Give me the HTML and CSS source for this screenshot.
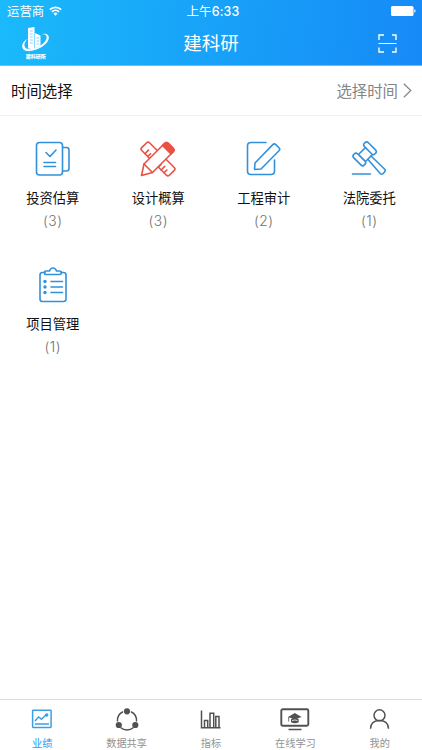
FILE: index.html
```html
<!DOCTYPE html>
<html lang="zh-CN">
<head>
<meta charset="utf-8">
<title>建科研</title>
<link rel="stylesheet" href="styles.css">
</head>
<body>
<div class="app">
  <header class="header">
    <div class="status">
      <div class="carrier"><span>运营商</span>
        <svg width="13" height="10" viewBox="0 0 13 10"><g fill="none" stroke="#fff" stroke-width="1.7"><path d="M.8 3.6a8.2 8.2 0 0 1 11.4 0M2.9 5.9a5.2 5.2 0 0 1 7.2 0"/></g><path d="M6.500 9.700 4.400 7.600a3 3 0 0 1 4.200 0z" fill="#fff"/></svg>
      </div>
      <div class="clock">上午<b>6:33</b></div>
      <svg class="battery" width="25" height="10" viewBox="0 0 25 10" fill="#fff"><rect width="22.500" height="10" rx="1.500"/><path d="M23.300 3.300q1.300.3 1.300 1.700t-1.300 1.700z"/></svg>
    </div>
    <div class="nav">
      <svg class="logo" width="30" height="34" viewBox="0 0 30 34">
        <path d="M8 11.500C1 15 .5 22 5.500 23.700 13 26 27.500 19 28.800 11.500 29.500 6.500 24.500 5.800 20.500 7.500c4.500-.7 6.800.8 6 4C25 17.500 14 23.300 8 22 3 21 3.500 15.500 8 11.500z" fill="#fff"/>
        <path d="M8 1 14.500 0V22.500L8 21.500zM15 6l5.500 2.500v10.500L15 21.500z" fill="#fff"/>
        <path d="M10 4h2.800M10 7h2.800M10 10h2.800M10 13h2.800M10 16h2.800M16.500 11h2.500M16.500 14h2.500M16.500 17h2.500" stroke="#3bbdf8" stroke-width=".6"/>
        <text x="15.800" y="31" text-anchor="middle" class="logo-text">建科研所</text>
      </svg>
      <h1>建科研</h1>
      <svg class="scan" width="20" height="20" viewBox="0 0 20 20" fill="none" stroke="#fff" stroke-width="1.400"><path d="M1 6V1h5M14 1h4v5M1 13.500V18h5M14 18h4v-4.500"/><path d="M.5 9.500h18" stroke-width="1"/></svg>
    </div>
  </header>
  <section class="filter">
    <span>时间选择</span>
    <div class="pick">选择时间<svg width="9" height="15" viewBox="0 0 9 15" fill="none" stroke="#858585" stroke-width="1.200"><path d="m.8.8 7 6.700-7 6.700"/></svg></div>
  </section>
  <main class="grid">
    <div class="item">
      <svg class="icon blue" viewBox="0 0 36 36"><rect x="1.500" y="1.500" width="26" height="32.500" rx="3"/><path d="M27.500 6.500h4q2.500 0 2.500 2.500v18.500q0 2.500-2.500 2.500h-4M11 11.500l4 4 6-6.500M9 21.500h11.500M9 25.500h11.500"/></svg>
      <p>投资估算</p><span>(3)</span>
    </div>
    <div class="item">
      <svg class="icon red" viewBox="0 0 36 36"><g transform="rotate(-45 18 18)"><rect x="12.500" y="-1.500" width="11" height="39" rx="2"/><path d="M12.500 5h5M12.500 9h4M12.500 13h5M12.500 24h4M12.500 28h5M12.500 32h4"/></g><path d="M4 23 24.500 2.500q2-2 4 0l4.500 4.500q2 2 0 4L12.500 31.500l-11 3z" fill="#fff"/><path d="m22.500 4.500 2-2q2-2 4 0l4.500 4.500q2 2 0 4l-2 2z" fill="#e95145"/><path d="m4 23 8.500 8.500"/></svg>
      <p>设计概算</p><span>(3)</span>
    </div>
    <div class="item">
      <svg class="icon blue" viewBox="0 0 36 36"><path d="M20 1.500H5Q1.500 1.500 1.500 5v25q0 3.500 3.500 3.500h20q3.500 0 3.500-3.500V19"/><path d="M8.500 28.500 9 22 26.800 3.600q1.500-1.500 3 0l3.200 3.200q1.500 1.500 0 3L15 28z"/></svg>
      <p>工程审计</p><span>(2)</span>
    </div>
    <div class="item">
      <svg class="icon blue" viewBox="0 0 36 36"><path d="m7.500 13.500 7.500-7.500 7 7-7.500 7.500z"/><rect x="11.500" y="4.500" width="15" height="5.500" rx="2.500" transform="rotate(45 19 7.250)" fill="#fff"/><rect x=".8" y="15.700" width="15" height="5.500" rx="2.500" transform="rotate(45 8.300 18.450)" fill="#fff"/><path d="m20 15 13.500 13q1.500 1.500 0 3l-1.300 1.500q-1.500 1.500-3 0L17 18.500M1.500 33h18"/></svg>
      <p>法院委托</p><span>(1)</span>
    </div>
    <div class="item">
      <svg class="icon blue" viewBox="0 0 36 36"><path d="M10 5.500H7.500Q5 5.500 5 8v24q0 2.500 2.500 2.500h21Q31 34.500 31 32V8q0-2.500-2.500-2.500H26"/><path d="M11 4h3.500q1-3 3.500-3t3.500 3H25q1.500 0 1.500 1.700T25 7.500H11Q9.500 7.500 9.500 5.700T11 4zM16 14.500h11.500M16 20h11.500M16 25.500h11.500"/><g fill="#3291dc" stroke="none"><circle cx="10" cy="14.500" r="1.700"/><circle cx="10" cy="20" r="1.700"/><circle cx="10" cy="25.500" r="1.700"/></g></svg>
      <p>项目管理</p><span>(1)</span>
    </div>
  </main>
  <nav class="tabs">
    <div class="tab active"><svg viewBox="0 0 30 24"><rect x="5.600" y="2.200" width="18.500" height="17.200" rx=".6"/><path d="M8 16h14M8 13l3.500-4 3 2.200 4.500-4.500"/><circle cx="19.700" cy="7" r="1" fill="#3c9fe5"/></svg><span>业绩</span></div>
    <div class="tab"><svg viewBox="0 0 30 24"><path d="M5.500 13.500A9.800 9.800 0 0 1 11 3.800M19 3.800a9.800 9.800 0 0 1 5.500 9.700M8.500 19.500a10 10 0 0 0 13 0"/><g fill="#515151" stroke="none"><circle cx="15" cy="3.300" r="3.100"/><circle cx="6.800" cy="17" r="3.100"/><circle cx="23.300" cy="17" r="3.100"/></g></svg><span>数据共享</span></div>
    <div class="tab"><svg viewBox="0 0 30 24"><path d="M5.500 2.500v17.200H24.500M8.500 19.500v-7h3.200v7M14 19.500V5.300h3.700v14.200M19.800 19.500V8.500h3.200v11"/></svg><span>指标</span></div>
    <div class="tab"><svg viewBox="0 0 30 24"><rect x="1.300" y="1.300" width="27" height="16.500" rx="1.500" stroke-width="1.900"/><path d="M8.500 21.500h13"/><g fill="#515151" stroke="none"><path d="m8 9 6.800-4 6.800 4-6.800 2.500zM11 11.300q3.800-2.300 7.700 0v3q-3.800 1.700-7.700 0z"/></g><path d="M8.700 9v4.500" stroke-width=".8"/><path d="M12 12.600q2.800-1.300 5.500 0" stroke="#fff" stroke-width=".8"/></svg><span>在线学习</span></div>
    <div class="tab"><svg viewBox="0 0 30 24"><circle cx="14.500" cy="7.300" r="5.500"/><path d="M5.500 20.700c0-5.200 3.500-8.300 9-8.300s9 3.100 9 8.300"/></svg><span>我的</span></div>
  </nav>
</div>
</body>
</html>
```
FILE: styles.css
```css
* { box-sizing: border-box; }
body { margin: 0; background: #fff; font-family: "Noto Sans CJK SC", sans-serif; color: #111; }
svg { display: block; flex: none; }
.app { height: 750px; display: flex; flex-direction: column; }
.header { height: 66px; color: #fff; background: linear-gradient(96deg, #1abafb, #168af7); border-bottom: 1px solid #65c2fb; }
.status { height: 22px; padding: 0 6px 0 7px; display: grid; grid-template-columns: 1fr auto 1fr; align-items: center; font-size: 12.400px; line-height: 22px; }
.carrier { display: flex; align-items: center; gap: 5px; margin-top: -2px; }
.clock { margin-left: 3px; letter-spacing: .2px; }
.clock b { font-family: Inter, sans-serif; font-weight: 500; }
.battery { justify-self: end; margin-top: -1px; }
.nav { height: 43px; padding: 0 14px 0 20px; display: grid; grid-template-columns: 1fr auto 1fr; align-items: center; }
.logo { margin-top: 1px; }
.logo-text { font-size: 5px; font-weight: 900; fill: #fff; }
h1 { margin: 0 6px 2px 0; font-size: 18.500px; font-weight: 400; line-height: 41px; }
.scan { justify-self: end; margin-right: 10px; }
.filter { height: 50px; padding: 0 10px 2px 11px; display: flex; align-items: center; justify-content: space-between; border-bottom: 1px solid #f2f2f2; font-size: 15.400px; line-height: 24px; }
.pick { display: flex; align-items: center; gap: 5px; color: #858585; }
.pick svg { margin-top: 2px; }
.grid { flex: 1; display: grid; grid-template-columns: repeat(4, 1fr); grid-auto-rows: 126px; }
.item { padding-top: 25px; display: flex; flex-direction: column; align-items: center; }
.icon { width: 36px; height: 36px; fill: none; stroke-width: 1.600; stroke-linecap: round; stroke-linejoin: round; }
.blue { stroke: #3291dc; }
.red { stroke: #e95145; }
.item p { margin: 11px 0 0; font-size: 13.300px; line-height: 20px; }
.item span { font-family: Inter, sans-serif; font-size: 13.800px; font-weight: 300; letter-spacing: .5px; line-height: 20px; margin-top: 3px; color: #707070; }
.tabs { height: 51px; padding-top: 8px; border-top: 1px solid #dcdcdc; display: grid; grid-template-columns: repeat(5, 1fr); }
.tab { display: flex; flex-direction: column; align-items: center; font-size: 10.200px; line-height: 15px; color: #939393; }
.tab svg { width: 30px; height: 24px; fill: none; stroke: #515151; stroke-width: 1.500; }
.tab span { margin-top: 3px; }
.tab.active { color: #239bf0; }
.tab.active svg { stroke: #3c9fe5; }
```
